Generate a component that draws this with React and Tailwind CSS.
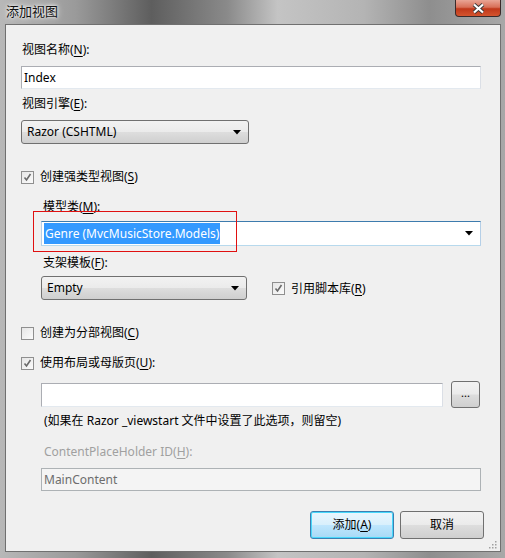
import React from "react";

const font = { fontFamily: '"Noto Sans", "Noto Sans CJK SC", sans-serif' };

function U({ children }) {
  return <span className="underline underline-offset-2">{children}</span>;
}

function Arrow() {
  return (
    <svg width="8" height="5" viewBox="0 0 8 5" className="shrink-0">
      <path d="M0 0h8L4 4.5z" fill="#000" />
    </svg>
  );
}

function CheckBox({ checked }) {
  return (
    <div className="w-[13px] h-[13px] border border-[#8f8f8f] bg-gradient-to-br from-[#e6e6e6] to-[#fbfbfb] grid place-items-center shrink-0">
      {checked && (
        <svg width="9" height="9" viewBox="0 0 9 9">
          <path d="M1.5 4.5l2 2.5 4-6" stroke="#6a6a6a" strokeWidth="1.6" fill="none" />
        </svg>
      )}
    </div>
  );
}

function Combo({ width, children }) {
  return (
    <div
      className="h-[24px] shrink-0 rounded-[3px] border border-[#707070] flex items-center pl-[5px] pr-[7px] bg-[linear-gradient(#f2f2f2_0%,#ebebeb_48%,#dddddd_52%,#cfcfcf_100%)]"
      style={{ width }}
    >
      <span className="flex-1 text-[12px] leading-none">{children}</span>
      <Arrow />
    </div>
  );
}

function Label({ children, className = "" }) {
  return <div className={`h-4 text-[12px] leading-4 ${className}`}>{children}</div>;
}

export default function App() {
  return (
    <div
      className="w-[505px] h-[558px] relative flex flex-col text-black bg-[linear-gradient(90deg,#b8b8b8_0%,#9a9a9a_15%,#5e5e5e_30%,#8a8a8a_45%,#c4c4c4_55%,#b4b4b4_72%,#8e8e8e_85%,#a8a8a8_100%)]"
      style={font}
    >
      {/* title bar */}
      <div className="h-6 flex items-start relative">
        <span className="ml-[6px] mt-[3px] text-[13px] leading-4 text-[#111] [text-shadow:0_0_6px_#fff,0_0_3px_#fff]">
          添加视图
        </span>
        <div className="absolute right-[4px] top-0 w-[46px] h-[17px] rounded-b-[4px] border border-t-0 border-[#3a2a2a] bg-[linear-gradient(#e9a595_0%,#d87058_45%,#c0381a_55%,#d4542e_100%)] grid place-items-center">
          <svg width="13" height="11" viewBox="0 0 13 11">
            <path d="M2 1.5l9 8M11 1.5l-9 8" stroke="#3a3a3a" strokeWidth="4" />
            <path d="M2 1.5l9 8M11 1.5l-9 8" stroke="#fff" strokeWidth="2.2" />
          </svg>
        </div>
      </div>

      {/* client area */}
      <div className="mx-[5px] mr-[4px] h-[528px] border border-[#707070] bg-[#f0f0f0] relative flex flex-col">
        <div className="flex flex-col pl-[15px] pr-[19px]">
          <Label className="mt-[17px] ml-[1px]">
            视图名称(<U>N</U>):
          </Label>
          <div className="mt-[8px] h-[23px] w-[460px] border border-[#abadb3] border-r-[#dbdfe6] border-b-[#e3e9ef] bg-white flex items-center pl-[2px] text-[12px]">
            Index
          </div>
          <Label className="mt-[7px] ml-[1px]">
            视图引擎(<U>E</U>):
          </Label>
          <div className="mt-[8px]">
            <Combo width={228}>Razor (CSHTML)</Combo>
          </div>

          <div className="mt-[25px] h-4 flex items-center gap-[6px] text-[12px]">
            <CheckBox checked />
            <span>
              创建强类型视图(<U>S</U>)
            </span>
          </div>

          <div className="pl-[20px] flex flex-col">
            <Label className="mt-[14px] ml-[2px]">
              模型类(<U>M</U>):
            </Label>
            <div className="mt-[6px] relative">
              <div className="h-[25px] w-[440px] border border-[#3d7bad] border-l-[#b5cfe7] border-r-[#b5cfe7] border-b-[#b7d9ed] bg-white flex items-center pl-[2px] pr-[7px]">
                <span className="flex-1 text-[12px]">
                  <span className="bg-[#3399ff] text-white py-[2px] px-[1px]">Genre (MvcMusicStore.Models)</span>
                </span>
                <Arrow />
              </div>
              <div className="absolute -left-[8px] -top-[10px] w-[204px] h-[41px] border border-[#e01010] pointer-events-none" />
            </div>
            <Label className="mt-[9px] ml-[2px]">
              支架模板(<U>F</U>):
            </Label>
            <div className="mt-[5px] flex items-center">
              <Combo width={206}>Empty</Combo>
              <div className="ml-[25px] mt-[1px] flex items-center gap-[6px] text-[12px]">
                <CheckBox checked />
                <span>
                  引用脚本库(<U>R</U>)
                </span>
              </div>
            </div>
          </div>

          <div className="mt-[25px] h-4 flex items-center gap-[6px] text-[12px]">
            <CheckBox />
            <span>
              创建为分部视图(<U>C</U>)
            </span>
          </div>
          <div className="mt-[14px] h-4 flex items-center gap-[6px] text-[12px]">
            <CheckBox checked />
            <span>
              使用布局或母版页(<U>U</U>):
            </span>
          </div>

          <div className="pl-[20px] flex flex-col">
            <div className="mt-[10px] h-[27px] flex items-center">
              <div className="h-[24px] w-[402px] border border-[#abadb3] border-r-[#dbdfe6] border-b-[#e3e9ef] bg-white" />
              <div className="ml-[8px] h-[27px] w-[29px] rounded-[3px] border border-[#707070] bg-[linear-gradient(#f2f2f2_0%,#ebebeb_48%,#dddddd_52%,#cfcfcf_100%)] grid place-items-center text-[11px] leading-none pb-[4px]">
                ...
              </div>
            </div>
            <Label className="mt-[5px] ml-[3px]">(如果在 Razor _viewstart 文件中设置了此选项，则留空)</Label>
            <Label className="mt-[15px] ml-[3px] text-[#a0a0a0]">
              ContentPlaceHolder ID(<U>H</U>):
            </Label>
            <div className="mt-[8px] h-[23px] w-[440px] border border-[#adb2b5] bg-[#f4f4f4] flex items-center pl-[2px] text-[12px] text-[#6d6d6d]">
              MainContent
            </div>
          </div>

          <div className="mt-[20px] -mr-[3px] flex justify-end gap-[6px]">
            <div className="h-[28px] w-[84px] shrink-0 rounded-[3px] border border-[#3c7fb1] shadow-[inset_0_0_0_1px_#48d8fb] bg-[linear-gradient(#eaf6fd_0%,#d9f0fc_48%,#bee6fd_52%,#a7d9f5_100%)] grid place-items-center text-[12px]">
              <span>
                添加(<U>A</U>)
              </span>
            </div>
            <div className="h-[28px] w-[84px] shrink-0 rounded-[3px] border border-[#707070] bg-[linear-gradient(#f2f2f2_0%,#ebebeb_48%,#dddddd_52%,#cfcfcf_100%)] grid place-items-center text-[12px]">
              取消
            </div>
          </div>
        </div>

        {/* resize grip */}
        <svg className="absolute right-[3px] bottom-[2px]" width="9" height="9" viewBox="0 0 9 9">
          {[
            [7, 1],
            [4, 4],
            [7, 4],
            [1, 7],
            [4, 7],
            [7, 7],
          ].map(([x, y], i) => (
            <rect key={i} x={x} y={y} width="1.5" height="1.5" fill="#a0a0a0" />
          ))}
        </svg>
      </div>
    </div>
  );
}
